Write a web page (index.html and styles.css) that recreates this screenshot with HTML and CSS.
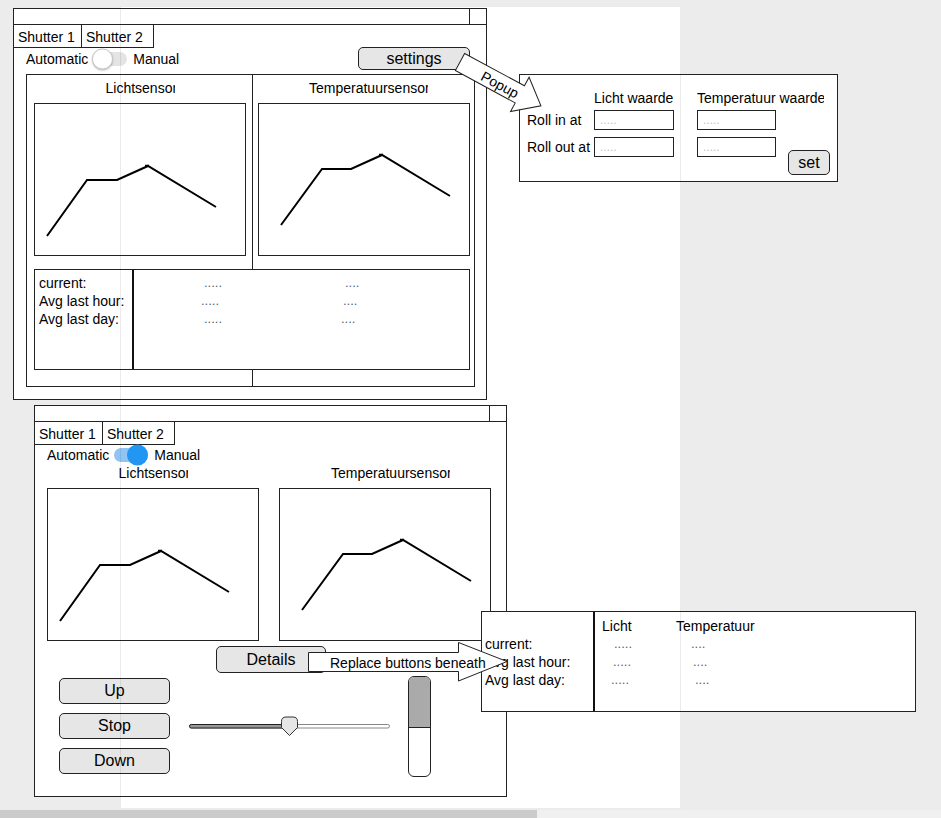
FILE: index.html
```html
<!DOCTYPE html>
<html>
<head>
<meta charset="utf-8">
<title>Shutter mockup</title>
<link rel="stylesheet" href="styles.css">
</head>
<body>
<div class="canvas">
  <div class="page"></div>

  <section class="win win1">
    <div class="titlebar"><span class="close"></span></div>
    <div class="tabs"><span class="tab tab1">Shutter 1</span><span class="tab tab2">Shutter 2</span></div>
    <div class="ctrl-row row1">
      <span>Automatic</span>
      <span class="toggle off"><span class="knob"></span></span>
      <span>Manual</span>
      <button class="btn settings">settings</button>
    </div>
    <div class="sensors">
      <div class="sgrid">
        <div class="scol">
          <div class="stitle"><span class="clip clip-l">Lichtsensor</span></div>
          <div class="chart">
            <svg width="210" height="151" viewBox="0 0 210 151"><polyline points="12,132 52,76 82,76 113,62 181,103" fill="none" stroke="#000" stroke-width="2"/><line x1="110" y1="61.5" x2="114" y2="61.5" stroke="#000" stroke-width="1.5"/></svg>
          </div>
        </div>
        <div class="scol">
          <div class="stitle shift1"><span class="clip clip-t">Temperatuursensor</span></div>
          <div class="chart">
            <svg width="210" height="151" viewBox="0 0 210 151"><polyline points="22,121 63,65 92,65 123,51 191,92" fill="none" stroke="#000" stroke-width="2"/><line x1="120" y1="50.5" x2="124" y2="50.5" stroke="#000" stroke-width="1.5"/></svg>
          </div>
        </div>
      </div>
      <div class="stats">
        <div class="lab">
          <div>current:</div>
          <div>Avg last hour:</div>
          <div>Avg last day:</div>
        </div>
        <div class="vals">
          <span>.....</span><span>....</span>
          <span class="nudge-l">.....</span><span class="nudge-l2">....</span>
          <span>.....</span><span class="nudge-l4">....</span>
        </div>
      </div>
    </div>
  </section>

  <section class="win win2">
    <div class="titlebar"><span class="close"></span></div>
    <div class="tabs"><span class="tab tab1">Shutter 1</span><span class="tab tab2">Shutter 2</span></div>
    <div class="ctrl-row row2">
      <span>Automatic</span>
      <span class="toggle on"><span class="knob"></span></span>
      <span>Manual</span>
    </div>
    <div class="sgrid sgrid2">
      <div class="scol">
        <div class="stitle"><span class="clip clip-l">Lichtsensor</span></div>
        <div class="chart">
          <svg width="210" height="151" viewBox="0 0 210 151"><polyline points="12,132 52,76 82,76 113,62 181,103" fill="none" stroke="#000" stroke-width="2"/><line x1="110" y1="61.5" x2="114" y2="61.5" stroke="#000" stroke-width="1.5"/></svg>
        </div>
      </div>
      <div class="scol">
        <div class="stitle shift2"><span class="clip clip-t">Temperatuursensor</span></div>
        <div class="chart">
          <svg width="210" height="151" viewBox="0 0 210 151"><polyline points="22,121 63,65 92,65 123,51 191,92" fill="none" stroke="#000" stroke-width="2"/><line x1="120" y1="50.5" x2="124" y2="50.5" stroke="#000" stroke-width="1.5"/></svg>
        </div>
      </div>
    </div>
    <div class="details-row"><button class="btn details">Details</button></div>
    <div class="controls">
      <div class="btncol">
        <button class="btn">Up</button>
        <button class="btn">Stop</button>
        <button class="btn">Down</button>
      </div>
      <svg class="slider" width="210" height="26" viewBox="0 0 210 26">
        <rect x="4.5" y="10.5" width="200" height="3.5" rx="1.75" fill="#fff" stroke="#888"/>
        <rect x="4.5" y="10.5" width="96" height="3.5" rx="1.75" fill="#999" stroke="#222"/>
        <path d="M96.5,7.5 Q96.5,3 101,3 L108,3 Q112.5,3 112.5,7.5 L112.5,13.5 L104.5,21.5 L96.5,13.5 Z" fill="#e6e6e6" stroke="#333"/>
      </svg>
      <div class="gauge"><div class="gfill"></div></div>
    </div>
  </section>

  <div class="popup">
    <div class="prow head">
      <span class="c1"></span>
      <span class="c2">Licht waarde</span>
      <span class="c3"><span class="clip clip-w">Temperatuur waarde</span></span>
    </div>
    <div class="prow r1">
      <span class="c1 plabel">Roll in at</span>
      <span class="c2"><span class="inp w80">.....</span></span>
      <span class="c3"><span class="inp w79">.....</span></span>
    </div>
    <div class="prow r2">
      <span class="c1 plabel">Roll out at</span>
      <span class="c2"><span class="inp w80">.....</span></span>
      <span class="c3"><span class="inp w79">.....</span></span>
      <button class="btn setbtn">set</button>
    </div>
  </div>

  <div class="dtable">
    <div class="lab">
      <div>current:</div>
      <div>Avg last hour:</div>
      <div>Avg last day:</div>
    </div>
    <div class="vals">
      <span class="hd">Licht</span><span class="hd">Temperatuur</span>
      <span class="d1">.....</span><span class="d2">....</span>
      <span class="d1 n1">.....</span><span class="d2 p1">....</span>
      <span class="d1 n2">.....</span><span class="d2 p2">....</span>
    </div>
  </div>

  <svg class="arrows" width="941" height="818" viewBox="0 0 941 818">
    <g transform="translate(460 62) rotate(28.4)">
      <polygon points="0,-9.7 68,-9.7 68,-19.5 92,0 68,19.5 68,9.7 0,9.7" fill="#fff" stroke="#222"/>
      <text x="46" y="6" text-anchor="middle">Popup</text>
    </g>
    <polygon points="308.5,652.5 458.5,652.5 458.5,642.5 507,661.5 458.5,681 458.5,671.5 308.5,671.5" fill="#fff" stroke="#222"/>
    <text x="330" y="668">Replace buttons beneath</text>
  </svg>

  <div class="page-edge"></div>
  <div class="scrollbar"><div class="thumb"></div></div>
</div>
</body>
</html>
```

FILE: styles.css
```css
body {
  margin: 0;
  font-family: "Liberation Sans", Arial, sans-serif;
  font-size: 14px;
  color: #000;
}

.canvas {
  position: relative;
  width: 941px;
  height: 818px;
  overflow: hidden;
  background: #ececec;
}

.page {
  position: absolute;
  left: 120px;
  top: 6px;
  width: 561px;
  height: 803px;
  background: #fff;
}

.page-edge {
  position: absolute;
  left: 120px;
  top: 6px;
  width: 561px;
  height: 803px;
  box-sizing: border-box;
  border: 1px solid rgba(0, 0, 0, 0.08);
  pointer-events: none;
}

.scrollbar {
  position: absolute;
  left: 0;
  bottom: 0;
  width: 941px;
  height: 8px;
  background: #f0f0f0;
}

.thumb {
  width: 537px;
  height: 100%;
  background: #cbcbcb;
}

/* windows */
.win {
  position: absolute;
  box-sizing: border-box;
  border: 1px solid #222;
  background: #fff;
  display: flex;
  flex-direction: column;
}

.win1 { left: 13px; top: 8px; width: 474px; height: 392px; }
.win2 { left: 34px; top: 405px; width: 473px; height: 392px; }

.titlebar {
  flex: none;
  height: 16px;
  box-sizing: border-box;
  border-bottom: 1px solid #222;
  display: flex;
  justify-content: flex-end;
}

.close {
  width: 17px;
  box-sizing: border-box;
  border-left: 1px solid #222;
}

.tabs {
  flex: none;
  display: flex;
  margin: -1px 0 0 -1px;
}

.tab {
  box-sizing: border-box;
  height: 24px;
  border: 1px solid #222;
  padding: 2px 0 0 4px;
  line-height: 20px;
  white-space: nowrap;
}

.tab1 { width: 69px; }
.tab2 { width: 73px; margin-left: -1px; }

.ctrl-row {
  flex: none;
  display: flex;
  align-items: center;
  padding-left: 12px;
}

.row1 { height: 23px; margin-top: -1px; }
.row2 { height: 20px; }

.toggle {
  position: relative;
  flex: none;
  width: 34px;
  height: 14px;
  border-radius: 7px;
  margin: 0 6px 0 5px;
}

.toggle.off { background: #e4e4e4; }
.toggle.on { background: #90c4f4; }

.knob {
  position: absolute;
  top: 50%;
  width: 21px;
  height: 21px;
  border-radius: 50%;
  box-sizing: border-box;
  transform: translateY(-50%);
}

.off .knob {
  left: -1px;
  background: #fff;
  border: 1px solid #c6c6c6;
  box-shadow: 0 1px 2px rgba(0, 0, 0, 0.25);
}

.on .knob {
  right: 0;
  background: #2196f3;
}

.btn {
  box-sizing: border-box;
  font-family: "Liberation Sans", Arial, sans-serif;
  font-size: 16px;
  color: #000;
  background: #e6e6e6;
  border: 1px solid #222;
  border-radius: 5px;
  padding: 0;
  text-align: center;
}

.settings {
  margin-left: auto;
  margin-right: 16px;
  width: 112px;
  height: 23px;
}

/* sensors block (window 1) */
.sensors {
  flex: none;
  margin: 4px 0 0 12px;
  width: 449px;
  height: 313px;
  box-sizing: border-box;
  border: 1px solid #222;
  padding: 5px 4px 0 7px;
  background: linear-gradient(#222, #222) no-repeat 225px 0 / 1px 100%;
}

.sgrid {
  display: grid;
  grid-template-columns: 212px 212px;
  column-gap: 12px;
}

.sgrid2 {
  column-gap: 20px;
  padding-left: 12px;
}

.stitle {
  height: 16px;
  line-height: 16px;
  text-align: center;
  margin-bottom: 7px;
}

.shift1 { padding-left: 9px; }
.shift2 { padding-left: 11px; }

.clip {
  display: inline-block;
  overflow: hidden;
  white-space: nowrap;
  vertical-align: top;
}

.clip-l { width: 69px; }
.clip-t { width: 119px; }
.clip-w { width: 127px; }

.chart {
  width: 212px;
  height: 153px;
  box-sizing: border-box;
  border: 1px solid #222;
  background: #fff;
}

.chart svg { display: block; }

.stats {
  margin-top: 13px;
  height: 101px;
  display: flex;
  box-sizing: border-box;
  border: 1px solid #222;
  background: #fff;
}

.stats .lab {
  width: 99px;
  box-sizing: border-box;
  border-right: 2px solid #111;
  padding: 4px 0 0 4px;
  line-height: 18px;
  white-space: nowrap;
}

.stats .vals {
  flex: 1;
  padding: 4px 0 0 70px;
  display: grid;
  grid-template-columns: 141px auto;
  align-content: start;
  line-height: 18px;
  font-size: 13px;
  color: #56627a;
}

.nudge-l { margin-left: -3px; }
.nudge-l2 { margin-left: -2px; }
.nudge-l4 { margin-left: -4px; }

/* window 2 lower part */
.details-row {
  flex: none;
  margin: 5px 0 0 181px;
}

.details {
  width: 110px;
  height: 27px;
}

.controls {
  flex: none;
  display: flex;
  align-items: flex-start;
  margin-top: 3px;
}

.btncol {
  display: flex;
  flex-direction: column;
  gap: 9px;
  margin: 2px 0 0 24px;
}

.btncol .btn {
  width: 111px;
  height: 26px;
}

.slider {
  display: block;
  margin: 38px 0 0 15px;
}

.gauge {
  margin-left: 13px;
  width: 23px;
  height: 101px;
  box-sizing: border-box;
  border: 1px solid #222;
  border-radius: 6px;
  overflow: hidden;
  background: #fff;
}

.gfill {
  height: 50px;
  background: #aaa;
  border-bottom: 1px solid #222;
}

/* settings popup */
.popup {
  position: absolute;
  left: 519px;
  top: 74px;
  width: 319px;
  height: 108px;
  box-sizing: border-box;
  border: 1px solid #222;
  background: #fff;
  padding: 15px 0 0 7px;
}

.prow { display: flex; align-items: flex-start; }
.prow.head { line-height: 16px; white-space: nowrap; }
.prow.r1 { margin-top: 4px; }
.prow.r2 { margin-top: 7px; }

.c1 { width: 67px; flex: none; }
.c2 { width: 103px; flex: none; }
.c3 { width: 91px; flex: none; }

.plabel {
  line-height: 20px;
  white-space: nowrap;
}

.inp {
  display: block;
  box-sizing: border-box;
  height: 20px;
  border: 1px solid #222;
  padding: 1px 0 0 5px;
  font-size: 12px;
  line-height: 17px;
  color: #c4c4c4;
}

.w80 { width: 80px; }
.w79 { width: 79px; }

.setbtn {
  width: 42px;
  height: 25px;
  margin-top: 13px;
}

/* details table */
.dtable {
  position: absolute;
  left: 481px;
  top: 611px;
  width: 435px;
  height: 101px;
  box-sizing: border-box;
  border: 1px solid #222;
  background: #fff;
  display: flex;
}

.dtable .lab {
  width: 113px;
  box-sizing: border-box;
  border-right: 2px solid #111;
  padding: 23px 0 0 3px;
  line-height: 18px;
  white-space: nowrap;
}

.dtable .vals {
  flex: 1;
  padding: 5px 0 0 7px;
  display: grid;
  grid-template-columns: 74px auto;
  align-content: start;
  line-height: 18px;
  font-size: 13px;
  color: #56627a;
}

.dtable .hd {
  font-size: 14px;
  color: #000;
}

.d1 { padding-left: 12px; }
.d2 { padding-left: 15px; }
.n1 { padding-left: 11px; }
.n2 { padding-left: 9px; }
.p1 { padding-left: 17px; }
.p2 { padding-left: 19px; }

/* arrows overlay */
.arrows {
  position: absolute;
  left: 0;
  top: 0;
  pointer-events: none;
}

.arrows text {
  font-family: "Liberation Sans", Arial, sans-serif;
  font-size: 14px;
  fill: #000;
}
```
